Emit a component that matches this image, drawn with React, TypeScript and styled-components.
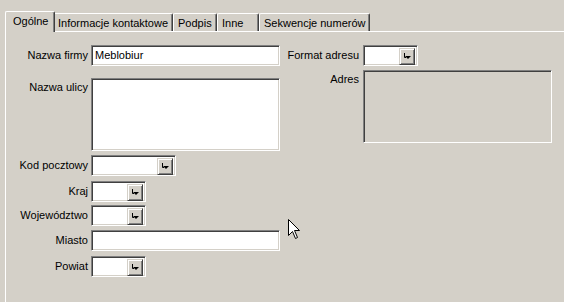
import React, { FunctionComponent } from 'react';
import styled, { createGlobalStyle } from 'styled-components';

const face = '#d4d0c8';

const GlobalStyle = createGlobalStyle`
  html, body {
    margin: 0;
    padding: 0;
    background: ${face};
  }
  body {
    font-family: 'Liberation Sans', Arial, sans-serif;
    font-size: 11px;
    color: #000;
  }
`;

const Window = styled.div`
  position: relative;
  width: 564px;
  height: 302px;
  overflow: hidden;
  background: ${face};
  display: flex;
  flex-direction: column;
`;

const TabBar = styled.div`
  display: flex;
  align-items: flex-end;
  height: 20px;
  margin-top: 11px;
  padding-left: 7px;
`;

const Tab = styled.div<{ $w: number; $active?: boolean }>`
  box-sizing: border-box;
  width: ${(p) => p.$w}px;
  height: ${(p) => (p.$active ? 21 : 18)}px;
  margin: ${(p) => (p.$active ? '0 -2px -1px -2px' : '0')};
  ${(p) => (p.$active ? 'position: relative; z-index: 1;' : '')}
  padding-left: ${(p) => (p.$active ? 7 : 4)}px;
  padding-top: ${(p) => (p.$active ? 3 : 3)}px;
  background: ${face};
  border-top: 1px solid #fff;
  border-left: 1px solid #fff;
  border-right: 1px solid #404040;
  border-radius: 2px 2px 0 0;
  box-shadow: inset -1px 0 #808080;
  line-height: 13px;
  white-space: nowrap;
`;

const Panel = styled.div`
  flex: 1;
  margin-left: 5px;
  border-top: 1px solid #fff;
  border-left: 1px solid #fff;
  padding-top: 13px;
  display: flex;
  gap: 7px;
`;

const Column = styled.div`
  display: flex;
  flex-direction: column;
`;

const Row = styled.div<{ $labelW: number; $mt?: number; $top?: boolean }>`
  display: grid;
  grid-template-columns: ${(p) => p.$labelW}px auto;
  column-gap: ${(p) => (p.$labelW > 80 ? 3 : 4)}px;
  align-items: ${(p) => (p.$top ? 'start' : 'center')};
  margin-top: ${(p) => p.$mt ?? 0}px;
`;

const Label = styled.span<{ $top?: boolean }>`
  text-align: right;
  line-height: 13px;
  white-space: nowrap;
  padding-top: ${(p) => (p.$top ? 3 : 0)}px;
`;

const Sunken = styled.div<{ $w: number; $h?: number; $grey?: boolean }>`
  box-sizing: border-box;
  width: ${(p) => p.$w}px;
  height: ${(p) => p.$h ?? 21}px;
  background: ${(p) => (p.$grey ? face : '#fff')};
  border: 1px solid;
  border-color: #808080 #fff #fff #808080;
  box-shadow: inset 1px 1px #404040, inset -1px -1px ${face};
  padding: 2px 3px;
  line-height: 15px;
  display: flex;
  align-items: flex-start;
`;

const ComboBox = styled(Sunken)`
  padding: 2px;
  justify-content: flex-end;
`;

const DropButton = styled.div`
  box-sizing: border-box;
  width: 16px;
  height: 17px;
  background: ${face};
  border: 1px solid;
  border-color: ${face} #404040 #404040 ${face};
  box-shadow: inset 1px 1px #fff, inset -1px -1px #808080;
  display: flex;
  align-items: center;
  justify-content: center;
`;

const Cursor = styled.svg`
  position: absolute;
  left: 288px;
  top: 219px;
`;

const Combo: FunctionComponent<{ w: number }> = ({ w }) => (
  <ComboBox $w={w}>
    <DropButton>
      <svg width='8' height='8' viewBox='0 0 8 8'>
        <path d='M1.5 0 V4.5 H3' stroke='#000' fill='none' />
        <polygon points='2,3 8,3 5,6' fill='#000' />
      </svg>
    </DropButton>
  </ComboBox>
);

const tabs = [
  { text: 'Ogólne', w: 46 },
  { text: 'Informacje kontaktowe', w: 120 },
  { text: 'Podpis', w: 44 },
  { text: 'Inne', w: 42 },
  { text: 'Sekwencje numerów', w: 111 },
];

const App: FunctionComponent = (): JSX.Element => {
  return (
    <>
      <GlobalStyle />
      <Window>
        <TabBar>
          {tabs.map((t, i) => (
            <Tab key={t.text} $w={t.w + (i === 0 ? 4 : 0)} $active={i === 0}>
              {t.text}
            </Tab>
          ))}
        </TabBar>
        <Panel>
          <Column>
            <Row $labelW={82}>
              <Label>Nazwa firmy</Label>
              <Sunken $w={189}>Meblobiur</Sunken>
            </Row>
            <Row $labelW={82} $mt={12} $top>
              <Label $top>Nazwa ulicy</Label>
              <Sunken $w={189} $h={73} />
            </Row>
            <Row $labelW={82} $mt={4}>
              <Label>Kod pocztowy</Label>
              <Combo w={85} />
            </Row>
            <Row $labelW={82} $mt={5}>
              <Label>Kraj</Label>
              <Combo w={55} />
            </Row>
            <Row $labelW={82} $mt={3}>
              <Label>Województwo</Label>
              <Combo w={55} />
            </Row>
            <Row $labelW={82} $mt={4}>
              <Label>Miasto</Label>
              <Sunken $w={189} />
            </Row>
            <Row $labelW={82} $mt={5}>
              <Label>Powiat</Label>
              <Combo w={55} />
            </Row>
          </Column>
          <Column>
            <Row $labelW={72}>
              <Label>Format adresu</Label>
              <Combo w={55} />
            </Row>
            <Row $labelW={72} $mt={4} $top>
              <Label $top>Adres</Label>
              <Sunken $w={189} $h={73} $grey />
            </Row>
          </Column>
        </Panel>
        <Cursor width='13' height='21' viewBox='0 0 13 21'>
          <polygon
            points='0.5,0.5 0.5,16.5 4.5,12.5 7.5,19.5 9.5,18.5 6.5,11.5 11.5,11.5'
            fill='#fff'
            stroke='#000'
            strokeWidth='1'
          />
        </Cursor>
      </Window>
    </>
  );
};

export default App;
